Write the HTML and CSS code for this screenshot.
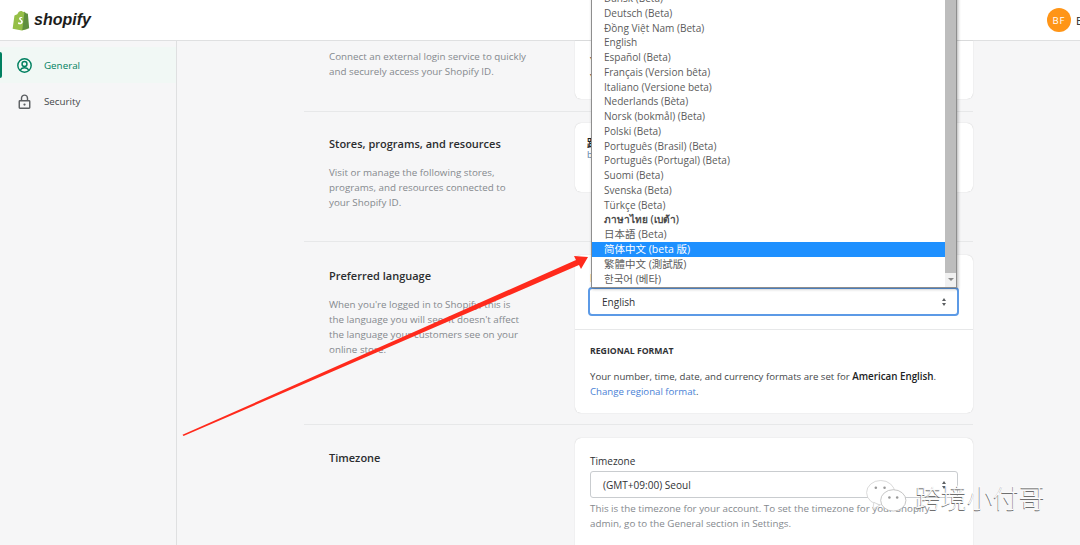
FILE: index.html
```html
<!DOCTYPE html>
<html lang="en">
<head>
<meta charset="utf-8">
<title>Shopify account</title>
<link rel="stylesheet" href="styles.css">
</head>
<body>
<header class="topbar">
  <div class="brand">
    <svg class="bag" viewBox="0 0 22 25" width="18" height="21"><path d="M3 6.500 6.500 5C7.500 2 9.500 .6 11.500 .8c1 .1 1.500.6 1.800 1.300l2-.3 1.200 1.700L19 23l-7 1.600L.8 22.500z" fill="#95bf47"/><path d="M15.300 1.800 17 3.500l2.400.6L21 22l-8.500 2.500z" fill="#5e8e3e"/><path d="M12.600 8.500c-.8-.4-2.900-.7-3.800.9-.7 1.500.6 2.300 1.500 3 1 .7 1.300 1.500.5 2.400-.8.800-2.100.2-2.900-.4l-.6 2.100c1.300 1 4.300 1.100 5.500-.8 1.100-1.900-.1-3.200-1.300-4.100-.9-.6-1.200-1.100-.9-1.600.4-.6 1.200-.5 2-.1z" fill="#fff"/></svg>
    <span class="wordmark">shopify</span>
  </div>
  <div class="user"><span class="avatar">BF</span><span class="username">B</span></div>
</header>
<div class="shell">
  <nav class="sidebar">
    <a class="navitem active">
      <svg class="navicon" viewBox="0 0 20 20" width="15" height="15"><circle cx="10" cy="10" r="8.900" fill="none" stroke="#008060" stroke-width="1.900"/><circle cx="10" cy="8" r="3.300" fill="none" stroke="#008060" stroke-width="1.900"/><path d="M4.500 15.800c1.500-2.300 3.300-2.900 5.500-2.900s4 .6 5.500 2.900" fill="none" stroke="#008060" stroke-width="1.900"/></svg>
      <span>General</span>
    </a>
    <a class="navitem">
      <svg class="navicon" viewBox="0 0 20 20" width="15" height="15"><path d="M6 9V5.500a4 4 0 0 1 8 0V9" fill="none" stroke="#5c5f62" stroke-width="1.900"/><rect x="3" y="9" width="14" height="10" rx="1" fill="none" stroke="#5c5f62" stroke-width="1.900"/><circle cx="10" cy="14" r="1.500" fill="#5c5f62"/></svg>
      <span>Security</span>
    </a>
  </nav>
  <main class="content">
    <section class="row row-login">
      <div class="info">
        <p class="desc">Connect an external login service to quickly and securely access your Shopify ID.</p>
      </div>
      <div class="card card-login"><p>Y</p><p>Y</p></div>
    </section>
    <section class="row row-stores">
      <div class="info">
        <h2>Stores, programs, and resources</h2>
        <p class="desc">Visit or manage the following stores, programs, and resources connected to your Shopify ID.</p>
      </div>
      <div class="card card-stores"><div class="store-glyph">跟</div><div class="store-sub">b</div></div>
    </section>
    <section class="row row-lang">
      <div class="info">
        <h2>Preferred language</h2>
        <p class="desc">When you're logged in to Shopify, this is the language you will see. It doesn't affect the language your customers see on your online store.</p>
      </div>
      <div class="card card-lang">
        <div class="card-sec sec-select">
          <div class="label">L</div>
          <div class="select focused"><span>English</span><span class="updown"></span></div>
        </div>
        <div class="card-sec sec-region">
          <h3>REGIONAL FORMAT</h3>
          <p>Your number, time, date, and currency formats are set for <b>American English</b>.<br><a class="link">Change regional format</a>.</p>
        </div>
      </div>
    </section>
    <section class="row row-tz">
      <div class="info"><h2>Timezone</h2></div>
      <div class="card card-tz">
        <div class="label">Timezone</div>
        <div class="select"><span>(GMT+09:00) Seoul</span><span class="updown"></span></div>
        <p class="hint">This is the timezone for your account. To set the timezone for your Shopify admin, go to the General section in Settings.</p>
      </div>
    </section>
  </main>
</div>

<div class="dropdown">
  <ul class="options">
    <li>Dansk (Beta)</li>
    <li>Deutsch (Beta)</li>
    <li>Đồng Việt Nam (Beta)</li>
    <li>English</li>
    <li>Español (Beta)</li>
    <li>Français (Version bêta)</li>
    <li>Italiano (Versione beta)</li>
    <li>Nederlands (Bèta)</li>
    <li>Norsk (bokmål) (Beta)</li>
    <li>Polski (Beta)</li>
    <li>Português (Brasil) (Beta)</li>
    <li>Português (Portugal) (Beta)</li>
    <li>Suomi (Beta)</li>
    <li>Svenska (Beta)</li>
    <li>Türkçe (Beta)</li>
    <li class="thai">ภาษาไทย (เบต้า)</li>
    <li class="cjk">日本語 (Beta)</li>
    <li class="cjk selected">简体中文 (beta 版)</li>
    <li class="cjk">繁體中文 (測試版)</li>
    <li class="cjk">한국어 (베타)</li>
  </ul>
  <div class="scrollbar"><span class="thumb"></span><span class="arrow"></span></div>
</div>

<svg class="arrow-over" viewBox="0 0 1080 545" width="1080" height="545"><path d="M182.500 434.800 L576 260 L574 256 L588 257 L581 269 L579 265 L183.500 436 Z" fill="#ff2a1c"/></svg>

<div class="watermark">
  <svg viewBox="0 0 44 34" width="43" height="33"><ellipse cx="16" cy="13" rx="14.500" ry="12.500" fill="#fff" stroke="#cfcfcf" stroke-width=".8"/><path d="M9 23l-1 7 7-4z" fill="#fff" stroke="#cfcfcf" stroke-width=".8"/><ellipse cx="29" cy="21" rx="13" ry="11" fill="#fff" stroke="#b5b5b5" stroke-width=".8"/><circle cx="11" cy="8" r="1.300" fill="#999"/><circle cx="20" cy="8" r="1.300" fill="#999"/><circle cx="25" cy="18" r="1.300" fill="#999"/><circle cx="33" cy="18" r="1.300" fill="#999"/></svg>
  <span>跨境小付哥</span>
</div>
</body>
</html>
```
FILE: styles.css
```css
* { box-sizing: border-box; }
html, body { margin: 0; height: 545px; overflow: hidden; }
body { background: #f6f6f7; font-family: "Open Sans", "Noto Sans", "Noto Sans CJK SC", sans-serif; font-size: 9.800px; color: #202223; position: relative; }
p, h2, h3, ul { margin: 0; padding: 0; }
.topbar { height: 41px; background: #fff; border-bottom: 1px solid #dfe0e1; display: flex; justify-content: space-between; align-items: center; padding-left: 12px; }
.brand { display: flex; align-items: center; gap: 4px; }
.wordmark { font-family: "Liberation Sans", sans-serif; font-weight: 700; font-style: italic; font-size: 16px; color: #1d1d1b; }
.user { display: flex; align-items: center; gap: 5px; width: 33px; overflow: hidden; }
.avatar { flex: none; width: 24px; height: 24px; border-radius: 50%; background: #ff9517; color: #fff; font-size: 9.500px; letter-spacing: 1px; display: flex; align-items: center; justify-content: center; }
.username { font-size: 11px; }
.shell { display: flex; height: 504px; }
.sidebar { width: 177px; flex: none; background: #f6f6f7; border-right: 1px solid #dfe0e1; padding-top: 6px; }
.navitem { height: 36px; display: flex; align-items: center; gap: 12px; padding-left: 17px; font-size: 9.800px; font-weight: 500; color: #44474a; position: relative; }
.navitem.active { color: #008060; background: #f1f8f5; }
.navitem.active::before { content: ""; position: absolute; left: 0; top: 5px; width: 2px; height: 26px; background: #008060; border-radius: 0 2px 2px 0; }
.content { flex: 1; padding-left: 127px; padding-right: 107px; }
.row { display: flex; justify-content: space-between; border-bottom: 1px solid #e7e8e9; }
.info { width: 223.500px; padding-left: 25px; }
.info h2 { font-size: 11px; font-weight: 600; color: #2b2d2f; line-height: 15px; margin-bottom: 14px; white-space: nowrap; }
.desc { line-height: 15px; color: #85898e; }
.card { width: 398px; background: #fff; border-radius: 6px; box-shadow: 0 0 1px rgba(0,0,0,.25); }
.row-login { height: 71px; padding-top: 8px; }
.card-login { height: 58px; margin-top: -8px; border-radius: 0 0 6px 6px; padding: 11px 15px; line-height: 17px; color: #303235; }
.row-stores { height: 130px; padding-top: 24px; }
.card-stores { height: 69px; margin-top: -13px; padding: 13px 12px; }
.store-glyph { font-size: 10px; line-height: 14px; font-weight: 700; }
.store-sub { font-size: 9px; line-height: 10px; color: #5c7fa8; }
.row-lang { height: 183px; padding-top: 26px; }
.card-lang { height: 158px; margin-top: -13px; display: flex; flex-direction: column; }
.card-sec { padding: 0 15px; }
.sec-select { height: 75px; border-bottom: 1px solid #e7e8e9; padding-top: 16px; }
.sec-region { padding-top: 14px; }
.label { font-size: 10px; line-height: 15px; color: #303235; margin-bottom: 1px; }
.sec-select .select { margin-left: -2px; margin-right: -1px; height: 29px; }
.select { height: 27px; border: 1px solid #c9cccf; border-radius: 3px; display: flex; align-items: center; justify-content: space-between; padding: 0 10px 0 12px; color: #303235; font-size: 10.050px; background: #fff; }
.select.focused { border: 2px solid #5c9ae6; border-radius: 4px; }
.updown { width: 5px; height: 8px; position: relative; }
.updown::before, .updown::after { content: ""; position: absolute; left: 0; border-left: 2.500px solid transparent; border-right: 2.500px solid transparent; }
.updown::before { top: 0; border-bottom: 3px solid #5c5f62; }
.updown::after { bottom: 0; border-top: 3px solid #5c5f62; }
h3 { font-size: 8.700px; font-weight: 700; line-height: 14px; color: #303235; margin-bottom: 11px; }
.sec-region p { font-size: 9.650px; line-height: 15px; color: #44474a; }
.sec-region b { font-size: 9.800px; font-weight: 600; color: #202223; }
.link { color: #4a7fd6; }
.row-tz { height: 130px; padding-top: 25px; border: none; }
.card-tz { height: 130px; margin-top: -12px; padding: 16px 15px; }
.card-tz .label { margin-bottom: 2px; }
.hint { margin-top: 3px; line-height: 15px; color: #85898e; }
.dropdown { position: absolute; left: 591px; top: -10px; width: 366px; height: 298px; background: #fff; border: 1px solid #8e8e8e; display: flex; box-shadow: 1px 1px 3px rgba(0,0,0,.3); }
.options { list-style: none; flex: 1; font-size: 10.050px; }
.options li { height: 14.780px; line-height: 14.780px; padding-left: 12px; color: #5c5c5c; white-space: nowrap; }
.options li.cjk { font-size: 10.500px; }
.options li.thai { font-weight: 600; color: #4a4a4a; }
.options li.selected { background: #1e90ff; color: #fff; }
.scrollbar { width: 11px; background: #f1f1f1; display: flex; flex-direction: column; }
.thumb { flex: 1; background: #bdbdbd; }
.arrow { height: 14px; position: relative; }
.arrow::after { content: ""; position: absolute; left: 3px; top: 5px; border-left: 3px solid transparent; border-right: 3px solid transparent; border-top: 3px solid #8a8a8a; }
.arrow-over { position: absolute; left: 0; top: 0; pointer-events: none; }
.watermark { position: absolute; left: 865px; top: 478px; display: flex; align-items: center; gap: 7px; }
.watermark span { font-family: "Noto Sans CJK SC", sans-serif; font-size: 26px; font-weight: 300; color: #fbfbfb; text-shadow: -.6px .6px 0 #6f6f6f; }
```
